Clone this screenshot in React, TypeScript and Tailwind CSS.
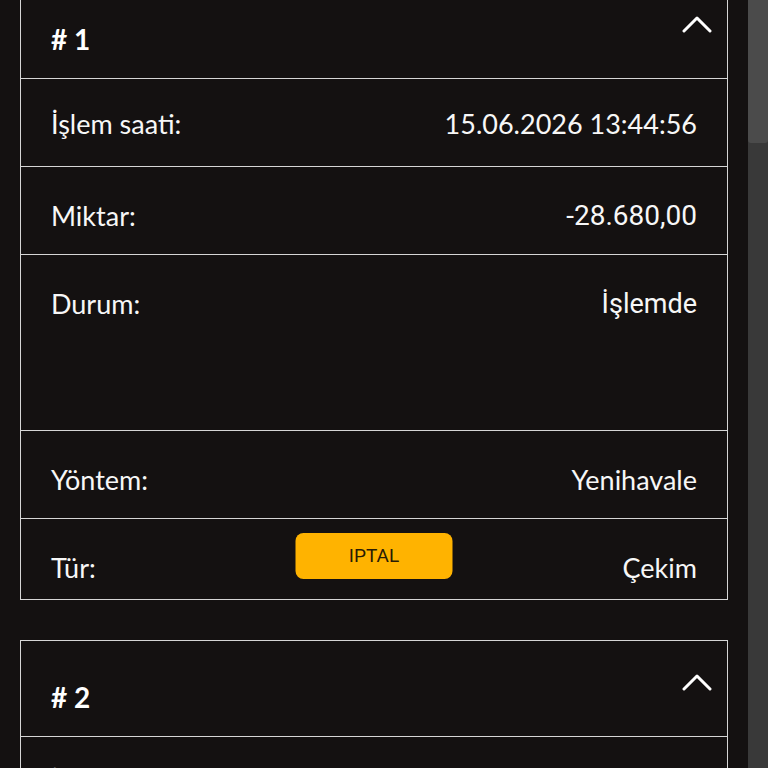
import React from "react";

const Chevron = () => (
  <svg width="30" height="18" viewBox="0 0 30 18" fill="none">
    <polyline points="2,16 15,3 28,16" stroke="#ffffff" strokeWidth="3" strokeLinecap="round" strokeLinejoin="round" />
  </svg>
);

const lato = "font-['Lato','Liberation_Sans',sans-serif]";
const roboto = "font-['Roboto','Liberation_Sans',sans-serif]";

function Row({
  label,
  value,
  valueFont,
  extra,
  last,
  first,
  children,
}: {
  label: string;
  value: string;
  valueFont?: string;
  extra?: boolean;
  last?: boolean;
  first?: boolean;
  children?: React.ReactNode;
}) {
  const pad = first
    ? "pt-[31px] pb-[28px]"
    : last
    ? "pt-[35px] pb-[17px]"
    : "pt-[35px] pb-[24px]";
  return (
    <div className={`relative ${last ? "" : "border-b border-[#d6d6d6]"} px-[30px] ${pad}`}>
      <div className="flex items-center justify-between text-[27px] leading-[28px] text-[#f7f7f7]">
        <span className={lato}>{label}</span>
        <span className={valueFont ?? lato}>{value}</span>
      </div>
      {extra && <div className="h-[88px]" />}
      {children}
    </div>
  );
}

function Card({ n, children }: { n: number; children?: React.ReactNode }) {
  return (
    <div className="border border-[#d6d6d6] bg-[#141111]">
      <div className="relative h-[96px] border-b border-[#d6d6d6] px-[30px] pt-[42px]">
        <span className={`${lato} text-[28px] leading-[28px] font-bold text-white`}>
          # {n}
        </span>
        <div className="absolute right-[15px] top-[32px]">
          <Chevron />
        </div>
      </div>
      {children}
    </div>
  );
}

export default function App() {
  return (
    <div className="flex h-[768px] w-[768px] overflow-hidden bg-[#141111]">
      <div className="flex-1 px-[20px]">
        <div className="-mt-[18px] flex flex-col gap-[40px]">
          <Card n={1}>
            <Row label="İşlem saati:" value="15.06.2026 13:44:56" first />
            <Row label="Miktar:" value="-28.680,00" valueFont={`${roboto} text-[28px]`} />
            <Row label="Durum:" value="İşlemde" valueFont={roboto} extra />
            <Row label="Yöntem:" value="Yenihavale" />
            <Row label="Tür:" value="Çekim" last>
              <div className="absolute left-1/2 top-[14px] -translate-x-1/2">
                <button
                  className={`${roboto} flex h-[46px] w-[157px] items-center justify-center rounded-[8px] bg-[#ffb300] text-[19px] text-[#2a1c05]`}
                >
                  IPTAL
                </button>
              </div>
            </Row>
          </Card>
          <Card n={2}>
            <Row label="İşlem saati:" value="15.06.2026 13:40:12" first />
          </Card>
        </div>
      </div>
      <div className="flex w-[20px] flex-col bg-[#393939]">
        <div className="h-[143px] rounded-b-[3px] bg-[#4b4b4b]" />
      </div>
    </div>
  );
}
